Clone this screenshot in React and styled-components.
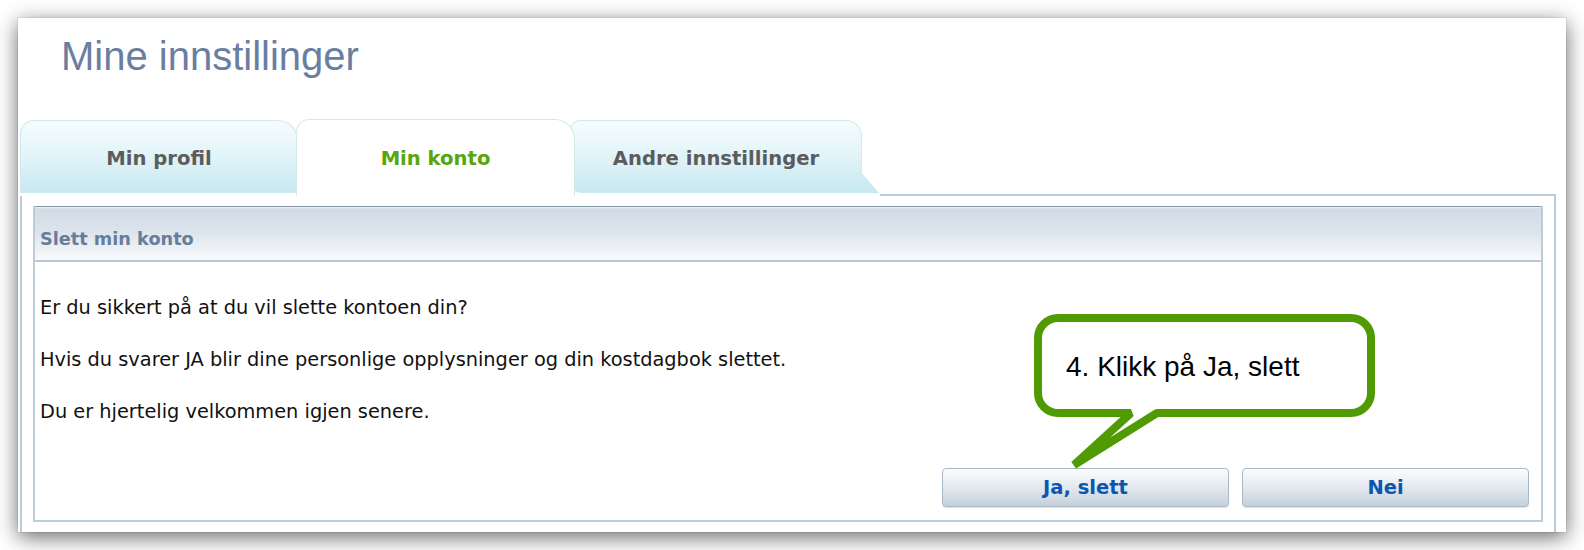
import React from "react";
import styled, { createGlobalStyle } from "styled-components";

const GlobalStyle = createGlobalStyle`
  html, body { margin: 0; padding: 0; background: #ffffff; }
  body { font-family: "DejaVu Sans", Verdana, sans-serif; }
  * { box-sizing: border-box; }
`;

const Page = styled.div`
  padding: 18px;
`;

const Window = styled.div`
  width: 1548px;
  height: 514px;
  background: #ffffff;
  box-shadow: 0 5px 20px rgba(0, 0, 0, 0.6), 0 0 1px rgba(0, 0, 0, 0.35);
  overflow: hidden;
  display: flex;
  flex-direction: column;
`;

const Title = styled.h1`
  margin: 0;
  padding: 15px 0 0 43px;
  font: 400 40px/46px "Liberation Sans", Arial, sans-serif;
  color: #6a7ea0;
`;

const TabsRow = styled.div`
  display: flex;
  align-items: flex-end;
  height: 77px;
  margin-top: 40px;
  padding: 0 10px 0 2px;
  flex: 0 0 auto;
`;

const Tab = styled.div`
  position: relative;
  z-index: ${(p) => (p.$active ? 3 : 1)};
  flex: 0 0 auto;
  width: ${(p) => p.$w}px;
  margin-left: ${(p) => p.$ml || 0}px;
  height: ${(p) => (p.$active ? 77 : 73)}px;
  margin-bottom: ${(p) => (p.$active ? 0 : 3)}px;
  padding-top: ${(p) => (p.$active ? 28 : 27)}px;
  text-align: center;
  font: 700 19.6px/22.7px "DejaVu Sans", Verdana, sans-serif;
  color: ${(p) => (p.$active ? "#58a60a" : "#5c5c5c")};
  background: ${(p) =>
    p.$active ? "#ffffff" : "linear-gradient(#f6fcfe 0%, #e3f5f9 45%, #c7e8f1 100%)"};
  border: 1px solid ${(p) => (p.$active ? "#d6e7ec" : "#d2e9ef")};
  border-bottom: 0;
  border-radius: ${(p) => p.$radius};

  ${(p) =>
    p.$foot &&
    `
    &::after {
      content: "";
      position: absolute;
      left: 100%;
      bottom: 0;
      width: 18px;
      height: 21px;
      background: linear-gradient(#d4edf4, #c7e8f1);
      clip-path: polygon(0 0, 0 100%, 100% 100%);
    }
  `}
`;

const TabLine = styled.div`
  flex: 1;
  height: 2px;
  margin-left: 18px;
  background: #b9cdd8;
`;

const Panel = styled.div`
  flex: 1;
  margin: 0 10px 0 2px;
  border-left: 2px solid #b9cdd8;
  border-right: 2px solid #b9cdd8;
  padding: 10px 11px 0 11px;
`;

const InnerBox = styled.div`
  position: relative;
  border: 2px solid #bdcdd8;
  border-top: 0;
`;

const Header = styled.div`
  height: 56px;
  padding: 21px 0 0 5px;
  border-top: 1px solid #8597a8;
  border-bottom: 2px solid #b8c9d5;
  background: linear-gradient(#eef2f5 0px, #d2dce6 2px, #dbe3eb 45%, #f9fafc 100%);
  font: 700 17.7px/22px "DejaVu Sans", Verdana, sans-serif;
  color: #687d9a;
`;

const Body = styled.div`
  padding: 35px 12px 13px 5px;
`;

const Text = styled.p`
  margin: 0 0 30px;
  font: 400 19.35px/22px "DejaVu Sans", Verdana, sans-serif;
  color: #111111;

  &:last-of-type {
    margin-bottom: 0;
  }
`;

const ButtonRow = styled.div`
  display: flex;
  justify-content: flex-end;
  gap: 13px;
  margin-top: 45px;
`;

const Button = styled.button`
  width: 287px;
  height: 39px;
  padding: 0;
  border: 1px solid #a9b9c8;
  border-radius: 4px;
  background: linear-gradient(#fbfcfd 0%, #e6ebf0 45%, #c5cfda 100%);
  box-shadow: 0 1px 1px rgba(0, 0, 0, 0.12);
  font: 700 19.5px/22px "DejaVu Sans", Verdana, sans-serif;
  color: #0b56b3;
  cursor: pointer;
`;

const Callout = styled.div`
  position: absolute;
  left: 995px;
  top: 104px;
  width: 350px;
  height: 165px;
  pointer-events: none;
`;

const CalloutShape = styled.svg`
  display: block;
  width: 350px;
  height: 165px;
`;

const CalloutText = styled.span`
  position: absolute;
  left: 36px;
  top: 41px;
  font: 400 28px/32px "Liberation Sans", Arial, sans-serif;
  color: #000000;
  white-space: nowrap;
`;

export default function App() {
  return (
    <>
      <GlobalStyle />
      <Page>
        <Window>
          <Title>Mine innstillinger</Title>
          <TabsRow>
            <Tab $w={278} $radius="14px 20px 0 0">Min profil</Tab>
            <Tab $w={279} $ml={-2} $active $radius="13px 20px 0 0">
              Min konto
            </Tab>
            <Tab $w={292} $ml={-5} $foot $radius="10px 16px 0 12px">
              Andre innstillinger
            </Tab>
            <TabLine />
          </TabsRow>
          <Panel>
            <InnerBox>
              <Header>Slett min konto</Header>
              <Body>
                <Text>Er du sikkert på at du vil slette kontoen din?</Text>
                <Text>Hvis du svarer JA blir dine personlige opplysninger og din kostdagbok slettet.</Text>
                <Text>Du er hjertelig velkommen igjen senere.</Text>
                <ButtonRow>
                  <Button>Ja, slett</Button>
                  <Button>Nei</Button>
                </ButtonRow>
              </Body>
              <Callout>
                <CalloutShape viewBox="0 0 350 165">
                  <path
                    d="M28 8 H321 A20 20 0 0 1 341 28 V83 A20 20 0 0 1 321 103 H127 L44 155 L101 103 H28 A20 20 0 0 1 8 83 V28 A20 20 0 0 1 28 8 Z"
                    fill="#ffffff"
                    stroke="#509b04"
                    strokeWidth="8"
                    strokeLinejoin="bevel"
                  />
                </CalloutShape>
                <CalloutText>4. Klikk på Ja, slett</CalloutText>
              </Callout>
            </InnerBox>
          </Panel>
        </Window>
      </Page>
    </>
  );
}
